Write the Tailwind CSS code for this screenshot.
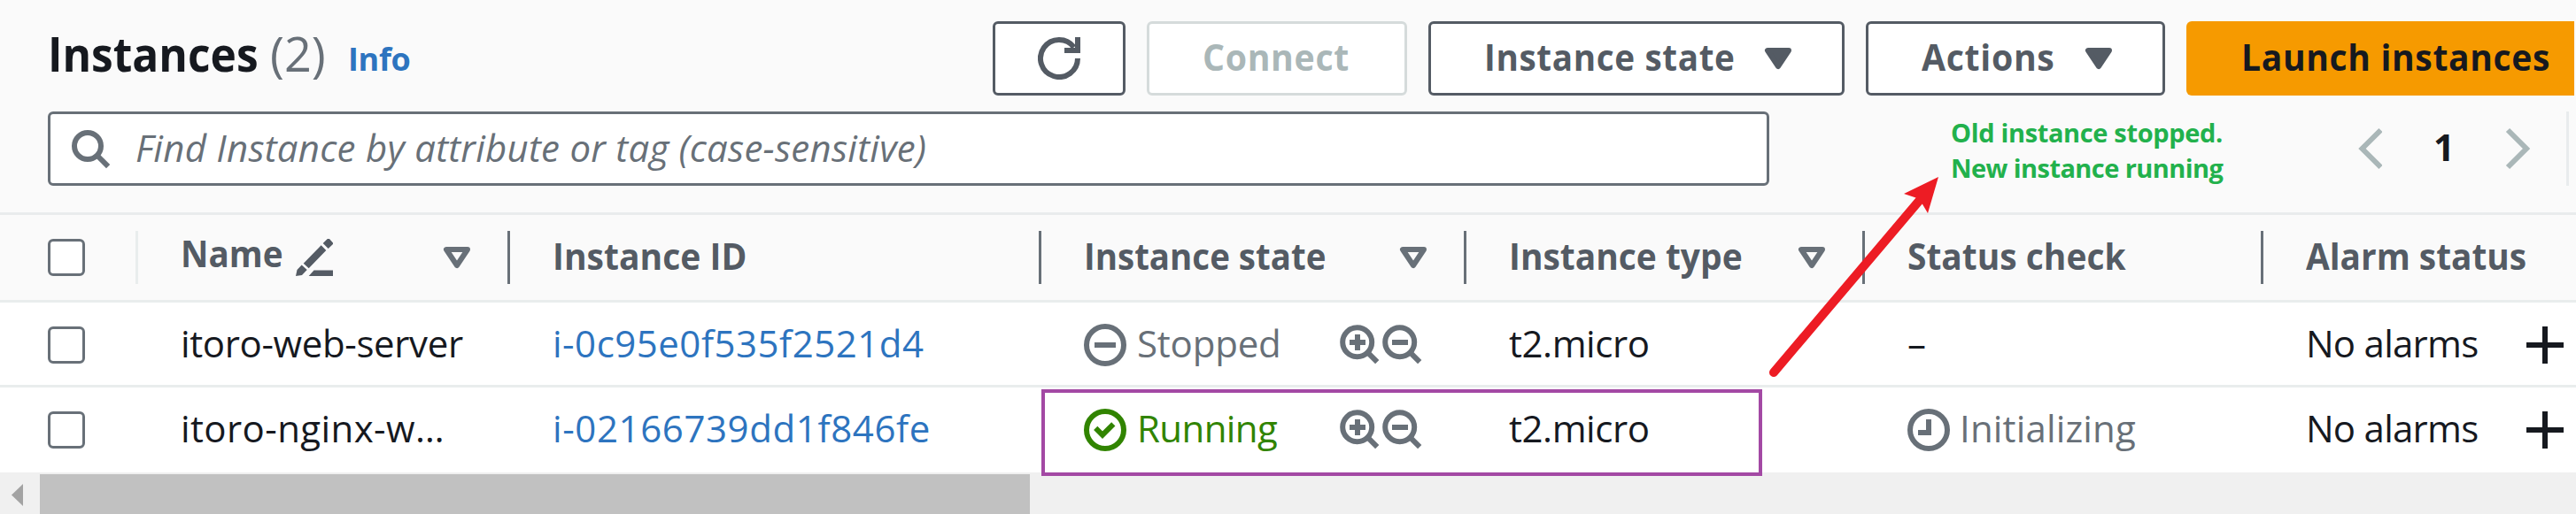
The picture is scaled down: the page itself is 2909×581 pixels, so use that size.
<!DOCTYPE html>
<html lang="en">
<head>
<meta charset="utf-8">
<title>Instances</title>
<script src="https://cdn.jsdelivr.net/npm/@tailwindcss/browser@4"></script>
</head>
<body class="bg-white">
<svg class="hidden">
  <symbol id="caret" viewBox="0 0 16 16"><path d="M4 5h8l-4 6z" fill="currentColor" stroke="currentColor" stroke-width="2" stroke-linejoin="round"/></symbol>
  <symbol id="sort" viewBox="0 0 16 16"><path d="M4 5h8l-4 6z" fill="none" stroke="currentColor" stroke-width="2" stroke-linejoin="round"/></symbol>
  <symbol id="zoom-in" viewBox="0 0 16 16"><g fill="none" stroke="currentColor" stroke-width="2"><circle cx="6.9" cy="6.9" r="5.5"/><path d="M10.8 10.8l3.6 3.6M7 4v6M4 7h6"/></g></symbol>
  <symbol id="zoom-out" viewBox="0 0 16 16"><g fill="none" stroke="currentColor" stroke-width="2"><circle cx="6.9" cy="6.9" r="5.5"/><path d="M10.8 10.8l3.6 3.6M4 7h6"/></g></symbol>
  <symbol id="plus" viewBox="0 0 42 42"><path d="M21 0v42M0 21h42" stroke="currentColor" stroke-width="6"/></symbol>
</svg>
<div class="relative flex h-[581px] w-[2909px] flex-col overflow-hidden font-['Open_Sans',sans-serif] text-[42px] leading-[48px] whitespace-nowrap text-[#16191f]">

  <header class="flex h-[243px] shrink-0 flex-col gap-[18px] border-b-[3px] border-[#e9eced] bg-[#fafafa] pt-6">
    <div class="flex h-[84px] pl-[54px]">
      <div class="flex h-[72px] w-[1067px] items-center">
        <h1 class="w-[251px] origin-left scale-x-[.92] text-[54px] font-bold">Instances</h1>
        <span class="w-[88px] text-[54px] text-[#687078]">(2)</span>
        <a class="pt-[14px] text-[36px] font-bold tracking-[-.3px] text-[#2d74bf]">Info</a>
      </div>
      <div class="flex gap-6 font-bold tracking-[.7px] text-[#545b64]">
        <button class="flex w-[150px] items-center justify-center rounded-[6px] border-[3px] border-[#545b64] bg-white">
          <svg class="size-12" viewBox="0 0 16 16" fill="none" stroke="currentColor" stroke-width="2"><path d="M15 8A7 7 0 1 1 13.6 3.8M10 5h5V0"/></svg>
        </button>
        <button class="flex w-[294px] items-center rounded-[6px] border-[3px] border-[#d5dbdb] bg-white pb-1 pl-[60px] text-[#aab7b8]"><span class="origin-left scale-x-[.935]">Connect</span></button>
        <button class="flex w-[470px] items-center rounded-[6px] border-[3px] border-[#545b64] bg-white pl-[60px]">
          <span class="w-[308px] origin-left scale-x-[.92] pb-1 text-left">Instance state</span>
          <svg class="size-12"><use href="#caret"/></svg>
        </button>
        <button class="flex w-[338px] items-center rounded-[6px] border-[3px] border-[#545b64] bg-white pl-[60px]">
          <span class="w-[176px] origin-left scale-x-[.935] pb-1 text-left">Actions</span>
          <svg class="size-12"><use href="#caret"/></svg>
        </button>
        <button class="flex w-[438px] items-center rounded-l-[6px] bg-[#f69a00] pb-1 pl-[62px] text-[#16191f]"><span class="origin-left scale-x-[.93]">Launch instances</span></button>
      </div>
    </div>
    <div class="flex h-[84px] pl-[54px]">
      <div class="flex w-[1944px] items-center gap-[27px] rounded-[6px] border-[3px] border-[#687078] bg-white pl-[21px] text-[#687078]">
        <svg class="size-12" viewBox="0 0 16 16" fill="none" stroke="currentColor" stroke-width="2"><circle cx="7" cy="7" r="5"/><path d="M10.5 10.5l4.2 4.2"/></svg>
        <span class="pb-[3px] tracking-[.25px] italic">Find Instance by attribute or tag (case-sensitive)</span>
      </div>
      <div class="ml-[205px] w-[457px] pt-1 text-[29px] leading-[40px] font-bold text-[#22b14c]">
        <p class="tracking-[-.35px]">Old instance stopped.</p>
        <p class="tracking-[-.57px]">New instance running</p>
      </div>
      <div class="flex w-[238px] items-center justify-between pr-[41px]">
        <svg class="h-12 w-[30px] text-[#aab7b8]" viewBox="0 0 30 48" fill="none" stroke="currentColor" stroke-width="6"><path d="M28.500 3L7.500 24l21 21"/></svg>
        <span class="pb-[5px] pl-[3px] font-bold">1</span>
        <svg class="h-12 w-[30px] text-[#aab7b8]" viewBox="0 0 30 48" fill="none" stroke="currentColor" stroke-width="6"><path d="M5 3l21 21L5 45"/></svg>
      </div>
      <div class="h-[84px] w-[3px] bg-[#e9eced]"></div>
    </div>
  </header>

  <div class="grid h-[99px] shrink-0 grid-cols-[156px_420px_600px_480px_450px_450px_353px] items-center border-b-[3px] border-[#e9eded] bg-[#fafafa] font-bold text-[#545b64]">
    <div class="flex h-[60px] items-center border-r-[3px] border-[#e9eded] pl-[54px]"><span class="size-[42px] rounded-[6px] border-[3px] border-[#687078] bg-white"></span></div>
    <div class="flex h-[60px] items-center border-r-[3px] border-[#687078] pl-12">
      <span class="w-[130px] origin-left scale-x-[.92] pb-[10px]">Name</span>
      <svg class="size-[42px]" viewBox="0 0 42 42" fill="currentColor"><path d="M0 42l1.500-7 5.200-5.500 6 5.500L7 41zM8.700 27.700l20-20.400 5.600 5.700-19.600 20.300zM30.700 5L35.500.2Q36.700-.6 38 0l4 4.500q.3 1-.3 1.800L36.700 11zM14.700 42l5.800-6.500H42V42z"/></svg>
      <svg class="mr-[33px] ml-auto size-12 text-[#687078]"><use href="#sort"/></svg>
    </div>
    <div class="flex h-[60px] items-center border-r-[3px] border-[#687078] pl-12"><span class="origin-left scale-x-[.93] pb-1">Instance ID</span></div>
    <div class="flex h-[60px] items-center border-r-[3px] border-[#687078] pl-12">
      <span class="origin-left scale-x-[.916] pb-1">Instance state</span>
      <svg class="mr-[33px] ml-auto size-12 text-[#687078]"><use href="#sort"/></svg>
    </div>
    <div class="flex h-[60px] items-center border-r-[3px] border-[#687078] pl-12">
      <span class="origin-left scale-x-[.927] pb-1">Instance type</span>
      <svg class="mr-[33px] ml-auto size-12 text-[#687078]"><use href="#sort"/></svg>
    </div>
    <div class="flex h-[60px] items-center border-r-[3px] border-[#687078] pl-12"><span class="origin-left scale-x-[.927] pb-1">Status check</span></div>
    <div class="flex h-[60px] items-center pl-12"><span class="origin-left scale-x-[.924] pb-1">Alarm status</span></div>
  </div>

  <div class="grid h-24 shrink-0 grid-cols-[156px_420px_600px_480px_450px_450px_353px] items-center border-b-[3px] border-[#e9eded] pt-[3px]">
    <div class="pl-[54px]"><span class="block size-[42px] rounded-[6px] border-[3px] border-[#687078] bg-white"></span></div>
    <div class="pb-1 pl-12 tracking-[-.37px]">itoro-web-server</div>
    <div class="pb-1 pl-12 tracking-[.5px] text-[#2d74bf]">i-0c95e0f535f2521d4</div>
    <div class="flex items-center pl-12 text-[#687078]">
      <svg class="size-12" viewBox="0 0 16 16" fill="none" stroke="currentColor" stroke-width="2"><circle cx="8" cy="8" r="7"/><path d="M4 8h8"/></svg>
      <span class="w-[240px] pb-1 pl-3 tracking-[-.2px]">Stopped</span>
      <svg class="size-12"><use href="#zoom-in"/></svg><svg class="size-12"><use href="#zoom-out"/></svg>
    </div>
    <div class="pb-1 pl-12 tracking-[-.45px]">t2.micro</div>
    <div class="pb-1 pl-12">–</div>
    <div class="flex items-center pl-12">
      <span class="w-[249px] pb-1 tracking-[-.75px]">No alarms</span>
      <svg class="size-[42px]"><use href="#plus"/></svg>
    </div>
  </div>

  <div class="grid h-24 shrink-0 grid-cols-[156px_420px_600px_480px_450px_450px_353px] items-center">
    <div class="pl-[54px]"><span class="block size-[42px] rounded-[6px] border-[3px] border-[#687078] bg-white"></span></div>
    <div class="pb-1 pl-12 tracking-[.4px]">itoro-nginx-w<span class="tracking-[2px]">…</span></div>
    <div class="pb-1 pl-12 tracking-[.6px] text-[#2d74bf]">i-02166739dd1f846fe</div>
    <div class="flex items-center pl-12 text-[#687078]">
      <svg class="size-12 text-[#1d8102]" viewBox="0 0 16 16" fill="none" stroke="#318400" stroke-width="2"><circle cx="8" cy="8" r="7"/><path d="M4.400 7.300L7 9.900l4.100-4.100"/></svg>
      <span class="w-[240px] pb-1 pl-3 tracking-[-.6px] text-[#318400]">Running</span>
      <svg class="size-12"><use href="#zoom-in"/></svg><svg class="size-12"><use href="#zoom-out"/></svg>
    </div>
    <div class="pb-1 pl-12 tracking-[-.45px]">t2.micro</div>
    <div class="flex items-center pl-12 text-[#687078]">
      <svg class="size-12" viewBox="0 0 16 16" fill="none" stroke="currentColor" stroke-width="2"><circle cx="8" cy="8" r="7"/><path d="M8 4v5H4"/></svg>
      <span class="pb-1 pl-[11px] tracking-[.15px]">Initializing</span>
    </div>
    <div class="flex items-center pl-12">
      <span class="w-[249px] pb-1 tracking-[-.75px]">No alarms</span>
      <svg class="size-[42px]"><use href="#plus"/></svg>
    </div>
  </div>

  <div class="flex h-[47px] shrink-0 bg-[#f0f0f0] pt-[2px]">
    <div class="w-[45px] pt-[11px] pl-[13px]"><svg class="h-[25px] w-[13px]" viewBox="0 0 13 25"><path d="M13 0v25L0 12.500z" fill="#a3a3a3"/></svg></div>
    <div class="h-[45px] w-[1118px] bg-[#c1c1c1]"></div>
  </div>

  <div class="absolute top-[440px] left-[1176px] h-[98px] w-[814px] border-4 border-[#a349a4]"></div>
  <svg class="absolute top-[190px] left-[1980px] h-[250px] w-[220px]" viewBox="1980 190 220 250">
    <path d="M2003 421L2168 226" stroke="#ed1c24" stroke-width="10" stroke-linecap="round"/>
    <path d="M2189 200l-39 19 13.500 4.500 7 6.500 6.500 11z" fill="#ed1c24"/>
  </svg>
</div>
</body>
</html>
